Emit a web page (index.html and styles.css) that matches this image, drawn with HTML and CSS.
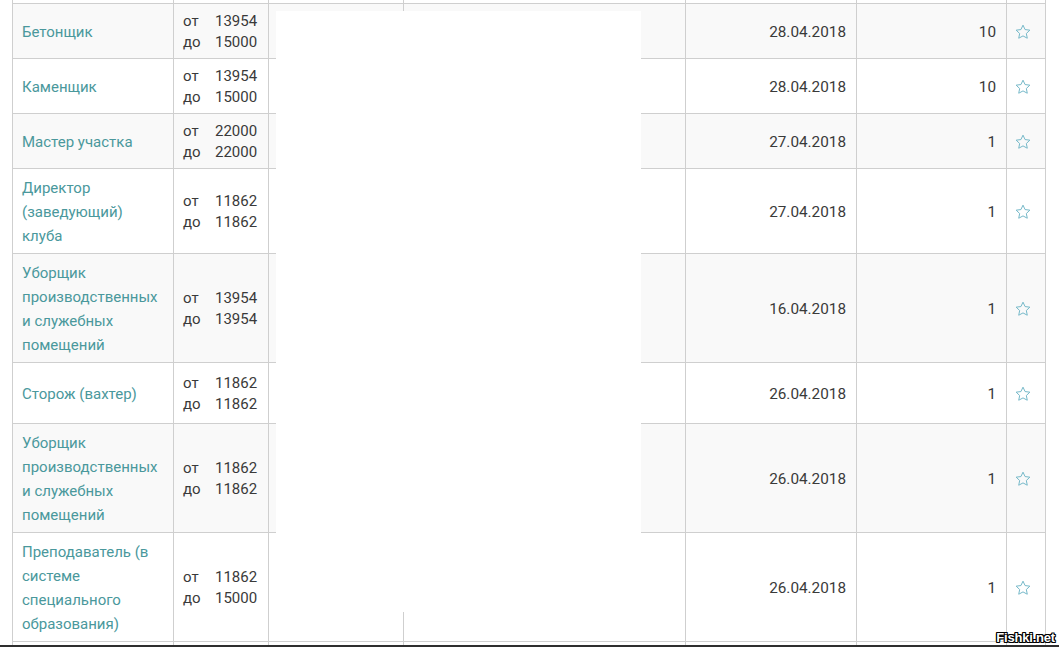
FILE: index.html
```html
<!DOCTYPE html>
<html lang="ru">
  <head>
    <meta charset="UTF-8" />
    <meta name="viewport" content="width=device-width, initial-scale=1.0" />
    <title>Вакансии</title>
    <link rel="stylesheet" href="styles.css">
  </head>
  <body>
    <div class="page">
      <table class="jobs">
        <colgroup>
          <col class="c-name" />
          <col class="c-pay" />
          <col class="c-a" />
          <col class="c-b" />
          <col class="c-date" />
          <col class="c-count" />
          <col class="c-fav" />
        </colgroup>
        <thead>
          <tr class="cut">
            <td></td><td></td><td></td><td></td><td></td><td></td><td></td>
          </tr>
        </thead>
        <tbody>
          <tr>
            <td><a href="#">Бетонщик</a></td>
            <td><div class="pay"><span>от</span><span>13954</span><span>до</span><span>15000</span></div></td>
            <td></td><td></td>
            <td class="num">28.04.2018</td>
            <td class="num">10</td>
            <td class="fav"><svg viewBox="0 0 24 22" class="star"><path d="M12 1.5l3.1 6.6 7.2.9-5.3 5 1.4 7.1L12 17.6l-6.4 3.5 1.4-7.1-5.3-5 7.2-.9z"/></svg></td>
          </tr>
          <tr>
            <td><a href="#">Каменщик</a></td>
            <td><div class="pay"><span>от</span><span>13954</span><span>до</span><span>15000</span></div></td>
            <td></td><td></td>
            <td class="num">28.04.2018</td>
            <td class="num">10</td>
            <td class="fav"><svg viewBox="0 0 24 22" class="star"><path d="M12 1.5l3.1 6.6 7.2.9-5.3 5 1.4 7.1L12 17.6l-6.4 3.5 1.4-7.1-5.3-5 7.2-.9z"/></svg></td>
          </tr>
          <tr>
            <td><a href="#">Мастер участка</a></td>
            <td><div class="pay"><span>от</span><span>22000</span><span>до</span><span>22000</span></div></td>
            <td></td><td></td>
            <td class="num">27.04.2018</td>
            <td class="num">1</td>
            <td class="fav"><svg viewBox="0 0 24 22" class="star"><path d="M12 1.5l3.1 6.6 7.2.9-5.3 5 1.4 7.1L12 17.6l-6.4 3.5 1.4-7.1-5.3-5 7.2-.9z"/></svg></td>
          </tr>
          <tr>
            <td><a href="#">Директор (заведующий) клуба</a></td>
            <td><div class="pay"><span>от</span><span>11862</span><span>до</span><span>11862</span></div></td>
            <td></td><td></td>
            <td class="num">27.04.2018</td>
            <td class="num">1</td>
            <td class="fav"><svg viewBox="0 0 24 22" class="star"><path d="M12 1.5l3.1 6.6 7.2.9-5.3 5 1.4 7.1L12 17.6l-6.4 3.5 1.4-7.1-5.3-5 7.2-.9z"/></svg></td>
          </tr>
          <tr>
            <td><a href="#">Уборщик производственных и служебных помещений</a></td>
            <td><div class="pay"><span>от</span><span>13954</span><span>до</span><span>13954</span></div></td>
            <td></td><td></td>
            <td class="num">16.04.2018</td>
            <td class="num">1</td>
            <td class="fav"><svg viewBox="0 0 24 22" class="star"><path d="M12 1.5l3.1 6.6 7.2.9-5.3 5 1.4 7.1L12 17.6l-6.4 3.5 1.4-7.1-5.3-5 7.2-.9z"/></svg></td>
          </tr>
          <tr class="tall">
            <td><a href="#">Сторож (вахтер)</a></td>
            <td><div class="pay"><span>от</span><span>11862</span><span>до</span><span>11862</span></div></td>
            <td></td><td></td>
            <td class="num">26.04.2018</td>
            <td class="num">1</td>
            <td class="fav"><svg viewBox="0 0 24 22" class="star"><path d="M12 1.5l3.1 6.6 7.2.9-5.3 5 1.4 7.1L12 17.6l-6.4 3.5 1.4-7.1-5.3-5 7.2-.9z"/></svg></td>
          </tr>
          <tr>
            <td><a href="#">Уборщик производственных и служебных помещений</a></td>
            <td><div class="pay"><span>от</span><span>11862</span><span>до</span><span>11862</span></div></td>
            <td></td><td></td>
            <td class="num">26.04.2018</td>
            <td class="num">1</td>
            <td class="fav"><svg viewBox="0 0 24 22" class="star"><path d="M12 1.5l3.1 6.6 7.2.9-5.3 5 1.4 7.1L12 17.6l-6.4 3.5 1.4-7.1-5.3-5 7.2-.9z"/></svg></td>
          </tr>
          <tr>
            <td><a href="#">Преподаватель (в системе специального образования)</a></td>
            <td><div class="pay"><span>от</span><span>11862</span><span>до</span><span>15000</span></div></td>
            <td></td><td></td>
            <td class="num">26.04.2018</td>
            <td class="num">1</td>
            <td class="fav"><svg viewBox="0 0 24 22" class="star"><path d="M12 1.5l3.1 6.6 7.2.9-5.3 5 1.4 7.1L12 17.6l-6.4 3.5 1.4-7.1-5.3-5 7.2-.9z"/></svg></td>
          </tr>
        </tbody>
        <tfoot>
          <tr class="cut cut-bottom">
            <td></td><td></td><td></td><td></td><td></td><td></td><td></td>
          </tr>
        </tfoot>
      </table>

      <!-- hidden part of the screenshot -->
      <div class="mask"></div>
      <div class="watermark">Fishki.net</div>
    </div>
    <div class="bottom-bar"></div>
  </body>
</html>
```

FILE: styles.css
```css
html,
body {
  margin: 0;
  padding: 0;
  background: #fff;
  overflow: hidden;
}
body {
  font-family: Roboto, "Noto Sans", Arial, sans-serif;
  font-size: 15px;
  color: #3a3a3a;
  height: 647px;
  display: flex;
  flex-direction: column;
}
.page {
  position: relative;
  padding-left: 12px;
  flex-shrink: 0;
}
.jobs {
  border-collapse: collapse;
  table-layout: fixed;
  width: 1033px;
}
.c-name { width: 161px; }
.c-pay { width: 95px; }
.c-a { width: 135px; }
.c-b { width: 282px; }
.c-date { width: 171px; }
.c-count { width: 150px; }
.c-fav { width: 39px; }

.jobs td {
  border: 1px solid #cfcfcf;
  padding: 7px 10px 5px 9px;
  line-height: 24px;
  vertical-align: middle;
}
.jobs thead td {
  border-top: none;
}
.jobs tfoot td {
  border-bottom: none;
}
.jobs tbody tr:nth-child(odd) {
  background-color: #f9f9f9;
}
.jobs .cut td {
  height: 3px;
  padding: 0;
  line-height: 0;
}
.jobs .cut-bottom td {
  height: 3px;
}
.jobs .tall td {
  height: 48px;
}
.jobs a {
  color: #4a989c;
  text-decoration: none;
}
.pay {
  display: grid;
  grid-template-columns: 32px auto;
  line-height: 21px;
}
.jobs td.num {
  text-align: right;
  font-size: 15.3px;
}
.jobs td.fav {
  padding-left: 8px;
  padding-right: 0;
}
.star {
  display: block;
  width: 16px;
  height: 15px;
  margin-top: -2px;
  fill: none;
  stroke: #76b9c9;
  stroke-width: 1.5;
  stroke-linejoin: miter;
}
.mask {
  position: absolute;
  left: 276px;
  top: 11px;
  width: 365px;
  height: 601px;
  background: #fff;
}
.watermark {
  position: absolute;
  right: 4px;
  bottom: 0;
  font-family: "Liberation Sans", Arial, sans-serif;
  font-weight: bold;
  font-size: 13px;
  letter-spacing: -0.2px;
  color: #fff;
  text-shadow: 1px 0 #000, -1px 0 #000, 0 1px #000, 0 -1px #000,
    1px 1px #000, -1px -1px #000, 1px -1px #000, -1px 1px #000;
}
.bottom-bar {
  height: 2px;
  background: #2e2e2e;
}
```
